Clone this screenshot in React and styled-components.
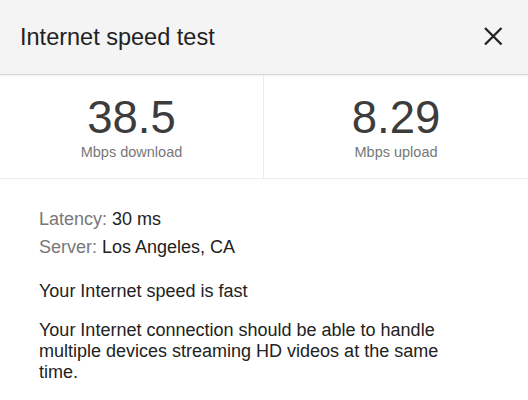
import React from "react";
import styled, { createGlobalStyle } from "styled-components";

const GlobalStyle = createGlobalStyle`
  html, body {
    margin: 0;
    padding: 0;
    background: #ffffff;
  }
  body {
    font-family: "Liberation Sans", Arial, Helvetica, sans-serif;
    color: #222222;
  }
`;

const Panel = styled.div`
  width: 528px;
  height: 400px;
  background: #ffffff;
  overflow: hidden;
`;

const Header = styled.header`
  height: 74px;
  display: flex;
  align-items: center;
  justify-content: space-between;
  padding: 0 25px 0 20px;
  background: #f4f4f4;
  border-bottom: 1px solid #d4d4d4;
  box-shadow: 0 1px 2px rgba(0, 0, 0, 0.06);
  position: relative;
`;

const Title = styled.h1`
  margin: 0;
  font-size: 23.5px;
  font-weight: 400;
  color: #222222;
`;

const CloseButton = styled.button`
  border: 0;
  padding: 0;
  margin: 0;
  background: transparent;
  width: 20px;
  height: 20px;
  display: flex;
  align-items: center;
  justify-content: center;
  cursor: pointer;
  margin-top: -2px;
`;

const Stats = styled.section`
  display: grid;
  grid-template-columns: 1fr 1fr;
  border-bottom: 1px solid #ececec;
`;

const Stat = styled.div`
  display: flex;
  flex-direction: column;
  align-items: center;
  padding: 21px 0 17px;
  border-right: ${(p) => (p.$divider ? "1px solid #ececec" : "none")};
`;

const Value = styled.div`
  font-size: 45.5px;
  line-height: 44px;
  color: #3c3c3c;
`;

const Unit = styled.div`
  margin-top: 4px;
  font-size: 14.5px;
  line-height: 17px;
  color: #777777;
`;

const Body = styled.section`
  padding: 30px 70px 0 39px;
  font-size: 18px;
  line-height: 21px;
`;

const InfoList = styled.div`
  display: flex;
  flex-direction: column;
  gap: 7px;
`;

const InfoRow = styled.div`
  color: #222222;
`;

const InfoLabel = styled.span`
  color: #777777;
`;

const Summary = styled.p`
  margin: 23px 0 0;
  color: #222222;
`;

const Description = styled.p`
  margin: 18px 0 0;
  color: #222222;
`;

const CloseIcon = () => (
  <svg width="20" height="20" viewBox="0 0 20 20" aria-hidden="true">
    <path
      d="M2 2 L18.5 18.5 M18.5 2 L2 18.5"
      stroke="#222222"
      strokeWidth="2.3"
      fill="none"
    />
  </svg>
);

const stats = [
  { value: "38.5", unit: "Mbps download" },
  { value: "8.29", unit: "Mbps upload" },
];

export default function App() {
  return (
    <>
      <GlobalStyle />
      <Panel>
        <Header>
          <Title>Internet speed test</Title>
          <CloseButton aria-label="Close">
            <CloseIcon />
          </CloseButton>
        </Header>
        <Stats>
          {stats.map((s, i) => (
            <Stat key={s.unit} $divider={i === 0}>
              <Value>{s.value}</Value>
              <Unit>{s.unit}</Unit>
            </Stat>
          ))}
        </Stats>
        <Body>
          <InfoList>
            <InfoRow>
              <InfoLabel>Latency:</InfoLabel> 30 ms
            </InfoRow>
            <InfoRow>
              <InfoLabel>Server:</InfoLabel> Los Angeles, CA
            </InfoRow>
          </InfoList>
          <Summary>Your Internet speed is fast</Summary>
          <Description>
            Your Internet connection should be able to handle multiple devices
            streaming HD videos at the same time.
          </Description>
        </Body>
      </Panel>
    </>
  );
}
